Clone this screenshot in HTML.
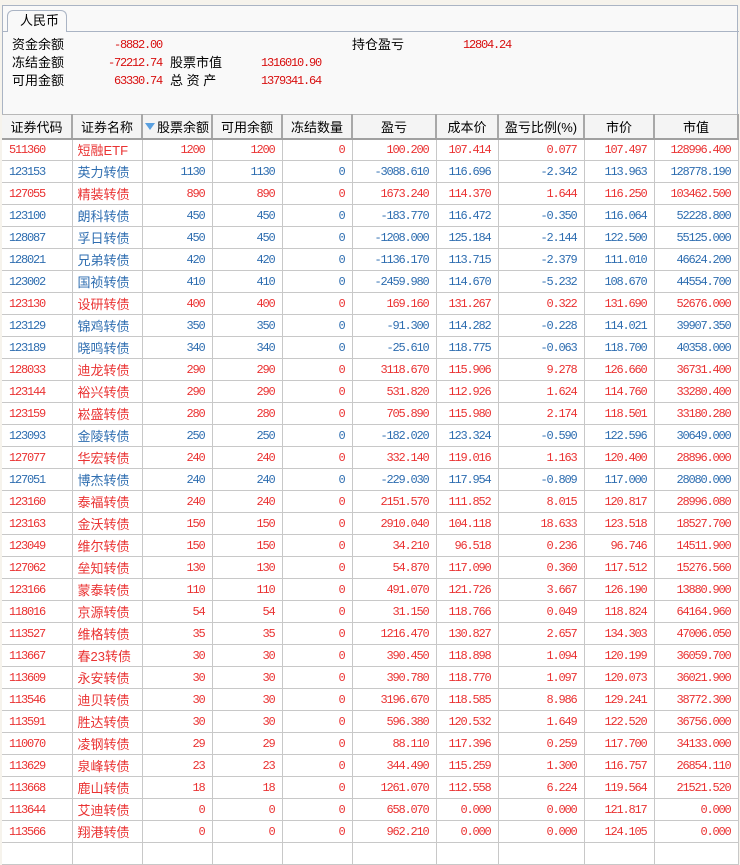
<!DOCTYPE html>
<html><head><meta charset="utf-8"><style>
*{margin:0;padding:0;box-sizing:border-box}
body{width:740px;height:850px;background:#f6f3ec;position:relative;overflow:hidden;font-family:"Liberation Sans","Noto Sans CJK SC",sans-serif}
#panel{position:absolute;left:2px;top:5px;width:736px;height:845px;background:#f9f9f9;border-left:1px solid #aab4c4;border-right:1px solid #aab4c4;border-top:1px solid #aab4c4}
#tabline{position:absolute;left:0;top:25px;width:736px;height:1px;background:#aab4c4}
#tab{position:absolute;left:4px;top:4px;width:60px;height:22px;border:1px solid #aab4c4;border-bottom:none;border-radius:6px 6px 0 0;background:#f9f9f9;font-size:13px;line-height:20px;padding-left:12px}
.s{position:absolute;font-size:13px;line-height:16px;color:#000}
.n{position:absolute;font-family:"Liberation Mono",monospace;font-size:12px;letter-spacing:-1.2px;line-height:16px;color:#d81010;text-align:right}
table{position:absolute;left:2px;top:114px;border-collapse:collapse;table-layout:fixed;background:#fff}
th{height:24px;background:#f4f4f4;font-weight:normal;font-size:13px;color:#000;border-top:1px solid #b8b8b8;border-bottom:2px solid #a0a0a0;border-right:2px solid #a8a8a8;text-align:center;white-space:nowrap;padding:0}
td{height:22px;border-right:1px solid #c8c8c8;border-bottom:1px solid #c8c8c8;font-family:"Liberation Mono",monospace;font-size:12px;letter-spacing:-1.2px;text-align:right;padding:0 7px 0 0;white-space:nowrap}
td.c{text-align:left;padding-left:7px}
td.m{text-align:left;padding-left:5px;font-family:"Liberation Sans","Noto Sans CJK SC",sans-serif;font-size:13px;letter-spacing:0}
tr.r td{color:#ea3232}
tr.b td{color:#2e6db0}
.tri{display:inline-block;width:0;height:0;border-left:5px solid transparent;border-right:5px solid transparent;border-top:7px solid #5aa0e0;vertical-align:2px;margin-right:2px}
</style></head><body>
<div id="panel">
<div id="tabline"></div>
<div id="tab">人民币</div>
</div>
<div class="s" style="left:12px;top:37px">资金余额</div>
<div class="n" style="left:60px;top:37px;width:102px">-8882.00</div>
<div class="s" style="left:12px;top:55px">冻结金额</div>
<div class="n" style="left:60px;top:55px;width:102px">-72212.74</div>
<div class="s" style="left:12px;top:73px">可用金额</div>
<div class="n" style="left:60px;top:73px;width:102px">63330.74</div>
<div class="s" style="left:170px;top:55px">股票市值</div>
<div class="n" style="left:220px;top:55px;width:101px">1316010.90</div>
<div class="s" style="left:170px;top:73px">总&nbsp;资&nbsp;产</div>
<div class="n" style="left:220px;top:73px;width:101px">1379341.64</div>
<div class="s" style="left:352px;top:37px">持仓盈亏</div>
<div class="n" style="left:420px;top:37px;width:91px">12804.24</div>
<table>
<colgroup><col style="width:70px"><col style="width:70px"><col style="width:70px"><col style="width:70px"><col style="width:70px"><col style="width:84px"><col style="width:62px"><col style="width:86px"><col style="width:70px"><col style="width:84px"></colgroup>
<tr><th>证券代码</th><th>证券名称</th><th><span class="tri"></span>股票余额</th><th>可用余额</th><th>冻结数量</th><th>盈亏</th><th>成本价</th><th>盈亏比例(%)</th><th>市价</th><th>市值</th></tr>
<tr class="r"><td class="c">511360</td><td class="m">短融ETF</td><td>1200</td><td>1200</td><td>0</td><td>100.200</td><td>107.414</td><td>0.077</td><td>107.497</td><td>128996.400</td></tr>
<tr class="b"><td class="c">123153</td><td class="m">英力转债</td><td>1130</td><td>1130</td><td>0</td><td>-3088.610</td><td>116.696</td><td>-2.342</td><td>113.963</td><td>128778.190</td></tr>
<tr class="r"><td class="c">127055</td><td class="m">精装转债</td><td>890</td><td>890</td><td>0</td><td>1673.240</td><td>114.370</td><td>1.644</td><td>116.250</td><td>103462.500</td></tr>
<tr class="b"><td class="c">123100</td><td class="m">朗科转债</td><td>450</td><td>450</td><td>0</td><td>-183.770</td><td>116.472</td><td>-0.350</td><td>116.064</td><td>52228.800</td></tr>
<tr class="b"><td class="c">128087</td><td class="m">孚日转债</td><td>450</td><td>450</td><td>0</td><td>-1208.000</td><td>125.184</td><td>-2.144</td><td>122.500</td><td>55125.000</td></tr>
<tr class="b"><td class="c">128021</td><td class="m">兄弟转债</td><td>420</td><td>420</td><td>0</td><td>-1136.170</td><td>113.715</td><td>-2.379</td><td>111.010</td><td>46624.200</td></tr>
<tr class="b"><td class="c">123002</td><td class="m">国祯转债</td><td>410</td><td>410</td><td>0</td><td>-2459.980</td><td>114.670</td><td>-5.232</td><td>108.670</td><td>44554.700</td></tr>
<tr class="r"><td class="c">123130</td><td class="m">设研转债</td><td>400</td><td>400</td><td>0</td><td>169.160</td><td>131.267</td><td>0.322</td><td>131.690</td><td>52676.000</td></tr>
<tr class="b"><td class="c">123129</td><td class="m">锦鸡转债</td><td>350</td><td>350</td><td>0</td><td>-91.300</td><td>114.282</td><td>-0.228</td><td>114.021</td><td>39907.350</td></tr>
<tr class="b"><td class="c">123189</td><td class="m">晓鸣转债</td><td>340</td><td>340</td><td>0</td><td>-25.610</td><td>118.775</td><td>-0.063</td><td>118.700</td><td>40358.000</td></tr>
<tr class="r"><td class="c">128033</td><td class="m">迪龙转债</td><td>290</td><td>290</td><td>0</td><td>3118.670</td><td>115.906</td><td>9.278</td><td>126.660</td><td>36731.400</td></tr>
<tr class="r"><td class="c">123144</td><td class="m">裕兴转债</td><td>290</td><td>290</td><td>0</td><td>531.820</td><td>112.926</td><td>1.624</td><td>114.760</td><td>33280.400</td></tr>
<tr class="r"><td class="c">123159</td><td class="m">崧盛转债</td><td>280</td><td>280</td><td>0</td><td>705.890</td><td>115.980</td><td>2.174</td><td>118.501</td><td>33180.280</td></tr>
<tr class="b"><td class="c">123093</td><td class="m">金陵转债</td><td>250</td><td>250</td><td>0</td><td>-182.020</td><td>123.324</td><td>-0.590</td><td>122.596</td><td>30649.000</td></tr>
<tr class="r"><td class="c">127077</td><td class="m">华宏转债</td><td>240</td><td>240</td><td>0</td><td>332.140</td><td>119.016</td><td>1.163</td><td>120.400</td><td>28896.000</td></tr>
<tr class="b"><td class="c">127051</td><td class="m">博杰转债</td><td>240</td><td>240</td><td>0</td><td>-229.030</td><td>117.954</td><td>-0.809</td><td>117.000</td><td>28080.000</td></tr>
<tr class="r"><td class="c">123160</td><td class="m">泰福转债</td><td>240</td><td>240</td><td>0</td><td>2151.570</td><td>111.852</td><td>8.015</td><td>120.817</td><td>28996.080</td></tr>
<tr class="r"><td class="c">123163</td><td class="m">金沃转债</td><td>150</td><td>150</td><td>0</td><td>2910.040</td><td>104.118</td><td>18.633</td><td>123.518</td><td>18527.700</td></tr>
<tr class="r"><td class="c">123049</td><td class="m">维尔转债</td><td>150</td><td>150</td><td>0</td><td>34.210</td><td>96.518</td><td>0.236</td><td>96.746</td><td>14511.900</td></tr>
<tr class="r"><td class="c">127062</td><td class="m">垒知转债</td><td>130</td><td>130</td><td>0</td><td>54.870</td><td>117.090</td><td>0.360</td><td>117.512</td><td>15276.560</td></tr>
<tr class="r"><td class="c">123166</td><td class="m">蒙泰转债</td><td>110</td><td>110</td><td>0</td><td>491.070</td><td>121.726</td><td>3.667</td><td>126.190</td><td>13880.900</td></tr>
<tr class="r"><td class="c">118016</td><td class="m">京源转债</td><td>54</td><td>54</td><td>0</td><td>31.150</td><td>118.766</td><td>0.049</td><td>118.824</td><td>64164.960</td></tr>
<tr class="r"><td class="c">113527</td><td class="m">维格转债</td><td>35</td><td>35</td><td>0</td><td>1216.470</td><td>130.827</td><td>2.657</td><td>134.303</td><td>47006.050</td></tr>
<tr class="r"><td class="c">113667</td><td class="m">春23转债</td><td>30</td><td>30</td><td>0</td><td>390.450</td><td>118.898</td><td>1.094</td><td>120.199</td><td>36059.700</td></tr>
<tr class="r"><td class="c">113609</td><td class="m">永安转债</td><td>30</td><td>30</td><td>0</td><td>390.780</td><td>118.770</td><td>1.097</td><td>120.073</td><td>36021.900</td></tr>
<tr class="r"><td class="c">113546</td><td class="m">迪贝转债</td><td>30</td><td>30</td><td>0</td><td>3196.670</td><td>118.585</td><td>8.986</td><td>129.241</td><td>38772.300</td></tr>
<tr class="r"><td class="c">113591</td><td class="m">胜达转债</td><td>30</td><td>30</td><td>0</td><td>596.380</td><td>120.532</td><td>1.649</td><td>122.520</td><td>36756.000</td></tr>
<tr class="r"><td class="c">110070</td><td class="m">凌钢转债</td><td>29</td><td>29</td><td>0</td><td>88.110</td><td>117.396</td><td>0.259</td><td>117.700</td><td>34133.000</td></tr>
<tr class="r"><td class="c">113629</td><td class="m">泉峰转债</td><td>23</td><td>23</td><td>0</td><td>344.490</td><td>115.259</td><td>1.300</td><td>116.757</td><td>26854.110</td></tr>
<tr class="r"><td class="c">113668</td><td class="m">鹿山转债</td><td>18</td><td>18</td><td>0</td><td>1261.070</td><td>112.558</td><td>6.224</td><td>119.564</td><td>21521.520</td></tr>
<tr class="r"><td class="c">113644</td><td class="m">艾迪转债</td><td>0</td><td>0</td><td>0</td><td>658.070</td><td>0.000</td><td>0.000</td><td>121.817</td><td>0.000</td></tr>
<tr class="r"><td class="c">113566</td><td class="m">翔港转债</td><td>0</td><td>0</td><td>0</td><td>962.210</td><td>0.000</td><td>0.000</td><td>124.105</td><td>0.000</td></tr>
<tr class="r"><td class="c"></td><td class="m"></td><td></td><td></td><td></td><td></td><td></td><td></td><td></td><td></td></tr>
</table>
</body></html>
